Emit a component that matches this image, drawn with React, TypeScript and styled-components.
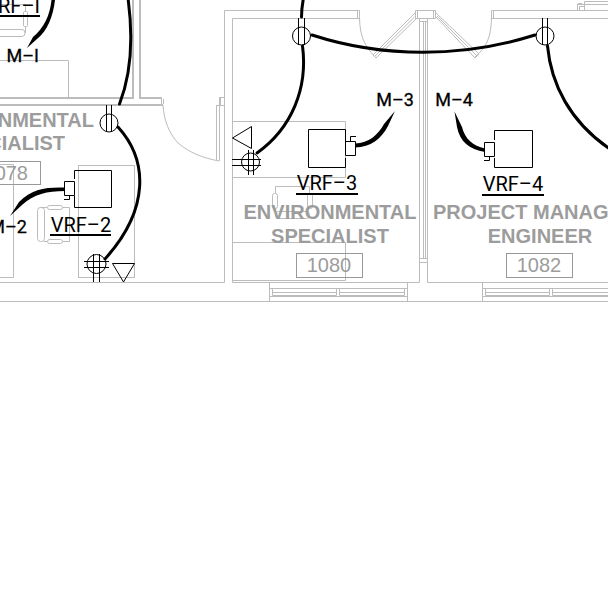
import React from "react";
import styled, { createGlobalStyle } from "styled-components";

const PageStyle = createGlobalStyle`
  body {
    margin: 0;
    background: #ffffff;
  }
`;

const Sheet = styled.main`
  width: 100%;
  background: #ffffff;
`;

const Plan = styled.svg`
  display: block;
  width: 100%;
  height: auto;
`;

const Walls = styled.g`
  fill: none;
  stroke: #bcbcbc;
  stroke-width: 1;
`;

const HeavyWalls = styled(Walls)`
  stroke-width: 2;
`;

const Device = styled.g`
  fill: none;
  stroke: #000000;
  stroke-width: 1;
`;

const Wiring = styled.g`
  fill: none;
  stroke: #000000;
  stroke-width: 3;
  stroke-linecap: round;
`;

const Leader = styled.path`
  fill: #000000;
`;

const NumberFrame = styled.rect`
  fill: none;
  stroke: #999999;
`;

const RoomText = styled.text<{ $bold?: boolean }>`
  font-family: "Liberation Sans", Arial, sans-serif;
  font-size: 20px;
  font-weight: ${(p) => (p.$bold ? 700 : 400)};
  fill: #9c9c9c;
`;

const TagText = styled.text<{ $small?: boolean }>`
  font-family: Roboto, "Liberation Sans", sans-serif;
  font-size: ${(p) => (p.$small ? 18 : 20)}px;
  fill: #000000;
  stroke: #000000;
  stroke-width: ${(p) => (p.$small ? "0.3px" : "0")};
`;

const Underline = styled.path`
  stroke: #000000;
  stroke-width: 2;
`;

type Anchor = "start" | "middle" | "end";
type Label = { text: string; x: number; y: number; anchor: Anchor };

const roomNames: Label[] = [
  { text: "NMENTAL", x: 94, y: 127, anchor: "end" },
  { text: "CIALIST", x: 65, y: 150, anchor: "end" },
  { text: "ENVIRONMENTAL", x: 330, y: 219, anchor: "middle" },
  { text: "SPECIALIST", x: 330, y: 243, anchor: "middle" },
  { text: "PROJECT MANAG", x: 433, y: 219, anchor: "start" },
  { text: "ENGINEER", x: 540, y: 243, anchor: "middle" },
];

const roomNumbers: Label[] = [
  { text: "078", x: 28, y: 180, anchor: "end" },
  { text: "1080", x: 329, y: 272, anchor: "middle" },
  { text: "1082", x: 539, y: 272, anchor: "middle" },
];

const unitTags: Label[] = [
  { text: "RF–I", x: 40, y: 13, anchor: "end" },
  { text: "VRF–2", x: 81, y: 232, anchor: "middle" },
  { text: "VRF–3", x: 327, y: 190, anchor: "middle" },
  { text: "VRF–4", x: 513, y: 191, anchor: "middle" },
];

const circuitTags: Label[] = [
  { text: "M–I", x: 39, y: 62, anchor: "end" },
  { text: "M–2", x: 27, y: 233, anchor: "end" },
  { text: "M–3", x: 395, y: 106, anchor: "middle" },
  { text: "M–4", x: 454, y: 106, anchor: "middle" },
];

function Structure() {
  return (
    <>
      <HeavyWalls>
        <path d="M133 0V98M0 98H134M140 0V98H162M0 105H163" />
      </HeavyWalls>
      <Walls>
        <path d="M161.500 97V106M163.500 99V104M219.500 97.500H224M219.500 97V105M220.500 97V105" />
        <path d="M163 105C164 121 169 133 178 143C190 153 203 158 219 161" />
        <path d="M216.500 105.500H224M216.500 105V161M219.500 105V161" />
        <path d="M0 282.500H224.500V10.500H359.500V18.500H232.500V282.500H419.500V18M357.500 10V18" />
        <path d="M427.500 18V282.500H608M423.500 21V258M425.500 21V258M419 21.500H428M419 258.500H428M419 262.500H428M0 301.500H608" />
        <path d="M415.500 10.500H435.500V18.500H415.500ZM417.500 11V18M433.500 11V18" />
        <path d="M415 13L373 55L376 58L417 18M414.500 17L375 56M359.500 18C360 36 364 45 375 57" />
        <path d="M436 13L479 54L475 58L435 16M437 16L477 56M491.500 18C491 37 487 47 475 57" />
        <path d="M608 10.500H491.500V18.500H608M493.500 10V18" />
        <path d="M577 4.500H584M577.500 4V10M579.500 10V6.500H584M578 3.500H582M584.500 10V1.500H608M584 4.500H608" />
        <path d="M269.500 282V301M407.500 282V301M269 288.500H408M269 296.500H408M272.500 289V295.500H336.500V289M272.500 292.500H336.500M339.500 289V295.500H404.500V289M339.500 292.500H404.500" />
        <path d="M482.500 282V301M482 288.500H608M482 296.500H608M485.500 289V295.500H549.500V289M485.500 292.500H549.500M552.500 289V295.500H608M552.500 292.500H608" />
      </Walls>
    </>
  );
}

function Furniture() {
  return (
    <Walls>
      <path d="M0 60.500H68.500V97M0 4.500H25.500V11M25.500 27V33M0 29.500H22Q25 29.500 25 33Q25 36.500 22 36.500H0" />
      <rect x="23.500" y="11.500" width="4" height="15" rx="1" />
      <path d="M0 164.500H13.500V277.500H0" />
      <rect x="78.500" y="165.500" width="56" height="112" />
      <rect x="37.500" y="207.500" width="7" height="34" rx="3" />
      <rect x="47.500" y="205.500" width="15" height="4" rx="2" />
      <rect x="47.500" y="239.500" width="15" height="4" rx="2" />
      <path d="M40 207.500H47M63 207.500H69.500V241.500H63M44 241.500H47" />
      <path d="M232 121.500H345.500V177.500H232M232 242.500H345.500V280.500H232" />
      <rect x="272.500" y="193.500" width="5" height="15" rx="2" />
      <rect x="307.500" y="193.500" width="5" height="15" rx="2" />
      <path d="M275.500 193V186.500H309.500V193M275.500 209V211" />
      <rect x="275.500" y="211.500" width="34" height="7" rx="3" />
    </Walls>
  );
}

function Equipment() {
  return (
    <Device>
      <path d="M74.500 179V170.500H111.500V207.500H74.500V196M64.500 181.500H74.500V195.500H64.500ZM69.500 195V199.500H64" />
      <path d="M345.500 165V167.500H308.500V129.500H345.500V142M345.500 141.500H355.500V155.500H345.500ZM350.500 141V136.500H356M345.500 158V167" />
      <path d="M494.500 140V130.500H532.500V167.500H494.500V158M484.500 142.500H494.500V156.500H484.500ZM489.500 156V160.500H484" />
      <circle cx="109" cy="123" r="9" />
      <path d="M106.500 105V132M111.500 105V132" />
      <circle cx="301.500" cy="36" r="9" />
      <path d="M298.500 18V45M304.500 18V45" />
      <circle cx="545" cy="36" r="9" />
      <path d="M542.500 18V45M547.500 18V45" />
      <circle cx="96.500" cy="264" r="9.500" />
      <path d="M93.500 254V282M99.500 254V282M84 261.500H109M84 267.500H109" />
      <circle cx="250.500" cy="162" r="9" />
      <path d="M248.500 150V175M253.500 150V175M232 159.500H261M232 165.500H261" />
      <path d="M112.500 263.500H134.500L123.500 282ZM232.500 138L251.500 126.500V148.500Z" />
    </Device>
  );
}

function Circuits() {
  return (
    <>
      <Wiring>
        <path d="M128 -2C133 35 132 72 119.500 104" />
        <path d="M118 127C148 160 150 209 105 259" />
        <path d="M303.500 -2C302 6 301.500 12 301.500 17" />
        <path d="M302.500 46C308 88 292 128 257 153" />
        <path d="M312 35C383 58 462 58 535 35" />
        <path d="M547.500 46C551 84 570 122 610 149" />
      </Wiring>
      <Leader d="M27 48L33 37C44 28 50 15 51.500 0H55C53 17 47 31 37 39Z" />
      <Leader d="M10 216L19 202C32 189 45 187 65 187.500V191C47 191 34 194 22 205Z" />
      <Leader d="M355 143.500C369 143 378 135 384 124L395 111L388 126C381 139 371 147 355 147.500Z" />
      <Leader d="M454.500 111.500L462 127C465 139 473 146 485 148.500V152C469 149 460 142 457 127Z" />
    </>
  );
}

export default function App() {
  return (
    <>
      <PageStyle />
      <Sheet>
        <Plan viewBox="0 0 608 304" role="img" aria-label="Floor plan with VRF units">
          <Structure />
          <Furniture />
          {roomNames.map((l) => (
            <RoomText key={l.text} $bold x={l.x} y={l.y} textAnchor={l.anchor}>
              {l.text}
            </RoomText>
          ))}
          {roomNumbers.map((l) => (
            <RoomText key={l.text} x={l.x} y={l.y} textAnchor={l.anchor}>
              {l.text}
            </RoomText>
          ))}
          <NumberFrame x="-25.500" y="161.500" width="66" height="23" />
          <NumberFrame x="296.500" y="253.500" width="66" height="24" />
          <NumberFrame x="506.500" y="253.500" width="66" height="24" />
          <Equipment />
          <Circuits />
          {unitTags.map((l) => (
            <TagText key={l.text} x={l.x} y={l.y} textAnchor={l.anchor}>
              {l.text}
            </TagText>
          ))}
          {circuitTags.map((l) => (
            <TagText key={l.text} $small x={l.x} y={l.y} textAnchor={l.anchor}>
              {l.text}
            </TagText>
          ))}
          <Underline d="M0 16H40M50 235H111M296 194H358M482 195H544" />
        </Plan>
      </Sheet>
    </>
  );
}
